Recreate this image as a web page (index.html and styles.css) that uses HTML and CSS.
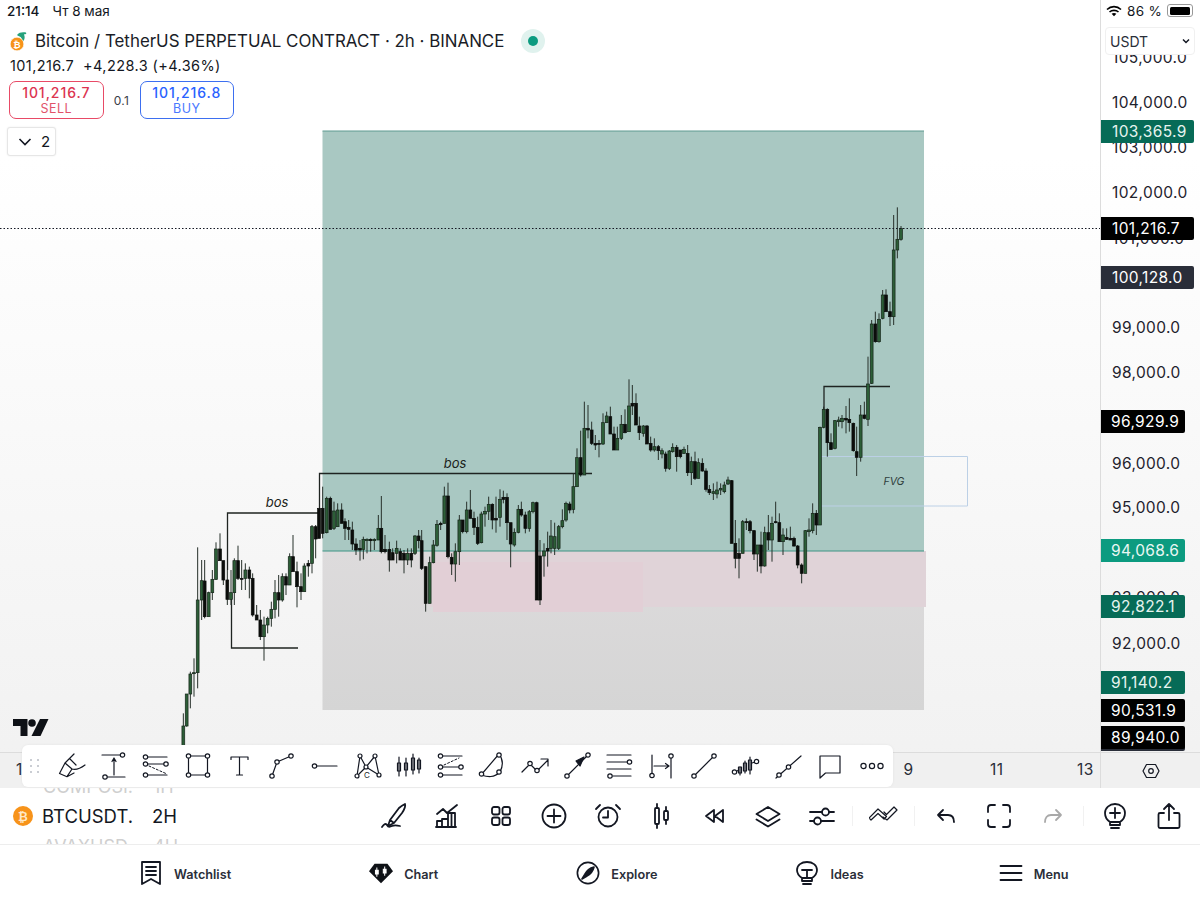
FILE: index.html
```html
<!DOCTYPE html>
<html lang="ru">
<head>
<meta charset="utf-8">
<title>BTCUSDT chart</title>
<link rel="stylesheet" href="styles.css">
</head>
<body>
<div class="screen">
  <div class="chart">
    <div class="plot">
      <svg class="plot-svg" width="1100" height="752" viewBox="0 0 1100 752">
        <defs>
          <linearGradient id="greyFade" x1="0" y1="0" x2="0" y2="1">
            <stop offset="0" stop-color="#dddbdc"/>
            <stop offset="1" stop-color="#d5d5d5"/>
          </linearGradient>
        </defs>
        <rect class="zone-grey" x="322.5" y="551" width="601.5" height="159"/>
        <rect class="zone-teal" x="322.5" y="131" width="601.5" height="420"/>
        <rect class="zone-pink-a" x="430" y="551" width="496" height="56"/>
        <rect class="zone-pink-b" x="433" y="562" width="210" height="50"/>
        <line class="zone-line" x1="322.5" y1="551" x2="924" y2="551"/>
        <line class="zone-line-top" x1="322.5" y1="131" x2="924" y2="131"/>
        <path class="fvg" d="M820 456.500H967.500V506H820"/>
        <path class="level" d="M227.500 570V513H320M231.500 593V648H298M319.500 510V473.500H592M824 410V386.500H890"/>
        <g id="candles"></g>
        <line class="last-price" x1="0" y1="228.500" x2="1100" y2="228.500"/>
        <text class="note" x="277" y="507">bos</text>
        <text class="note" x="455" y="468">bos</text>
        <text class="note small" x="894" y="485">FVG</text>
      </svg>
    </div>
    <div class="axis">
      <span class="tick" style="top:48px">105,000.0</span>
      <span class="tick" style="top:93px">104,000.0</span>
      <span class="tick" style="top:138px">103,000.0</span>
      <span class="tick" style="top:183px">102,000.0</span>
      <span class="tick" style="top:229px">101,000.0</span>
      <span class="tick" style="top:318px">99,000.0</span>
      <span class="tick" style="top:363px">98,000.0</span>
      <span class="tick" style="top:454px">96,000.0</span>
      <span class="tick" style="top:498px">95,000.0</span>
      <span class="tick" style="top:588px">93,000.0</span>
      <span class="tick" style="top:634px">92,000.0</span>
      <span class="tag wide teal" style="top:120px">103,365.9</span>
      <span class="tag wide black" style="top:217px">101,216.7</span>
      <span class="tag wide slate" style="top:266px">100,128.0</span>
      <span class="tag black" style="top:410px">96,929.9</span>
      <span class="tag bright" style="top:539px">94,068.6</span>
      <span class="tag teal" style="top:595px">92,822.1</span>
      <span class="tag teal" style="top:671px">91,140.2</span>
      <span class="tag black" style="top:699px">90,531.9</span>
      <span class="tag slate tall" style="top:729px"></span>
      <span class="tag black" style="top:726px">89,940.0</span>
    </div>
    <div class="timescale">
      <span class="date first">1</span>
      <span class="date d9">9</span>
      <span class="date d11">11</span>
      <span class="date d13">13</span>
    </div>
    <div class="corner">
      <svg width="20" height="20" viewBox="0 0 20 20" class="ic"><path d="M5.500 3.500h9L18 10l-3.500 6.500h-9L2 10z"/><circle cx="10" cy="10" r="2.300"/></svg>
    </div>
  </div>

  <div class="status">
    <span class="clock"><b>21:14</b><span>Чт 8 мая</span></span>
    <span class="sys">
      <svg width="16" height="12" viewBox="0 0 16 12"><path class="wifi" d="M1 4.500C5 .7 11 .7 15 4.500M3.500 7C6 4.800 10 4.800 12.500 7"/><path d="M5.600 8.700c1.400-1.100 3.400-1.100 4.800 0L8 11.200z"/></svg>
      <span>86 %</span>
      <span class="battery"><i></i></span>
    </span>
  </div>

  <div class="legend">
    <div class="title-row">
      <svg class="pair" width="22" height="22" viewBox="0 0 22 22"><path class="swoosh" d="M8 5c2-3 6-3 9-2.500 1 2-1 1.500-2 2 1 2 1 5-1 7-1-1-1-3-2-4-1-1-3-1.500-4-2.500z"/><circle cx="8" cy="14" r="6.800" class="coin"/><text x="8" y="17.500" class="coin-b">₿</text></svg>
      <span class="title">Bitcoin / TetherUS PERPETUAL CONTRACT · 2h · BINANCE</span>
      <span class="live"><i></i></span>
    </div>
    <div class="quote">101,216.7&nbsp; +4,228.3 (+4.36%)</div>
    <div class="trade">
      <div class="trade-btn sell"><b>101,216.7</b><span>SELL</span></div>
      <span class="qty">0.1</span>
      <div class="trade-btn buy"><b>101,216.8</b><span>BUY</span></div>
    </div>
    <div class="collapse">
      <svg width="14" height="10" viewBox="0 0 14 10"><path d="M1.500 2l5.500 5.500L12.500 2"/></svg>
      <span>2</span>
    </div>
  </div>

  <div class="currency"><span>USDT</span><svg width="10" height="7" viewBox="0 0 10 7"><path d="M2 1.500l3 3 3-3"/></svg></div>

  <svg class="tv-logo" width="36" height="19" viewBox="0 0 36 19"><path d="M0 1h14.500v17H7.500V8H0z"/><circle cx="19" cy="5" r="3.800"/><path d="M27 1h8.500l-8 17H18.500z"/></svg>

  <div class="draw-bar">
    <svg class="grip" width="12" height="16" viewBox="0 0 12 16"><g><circle cx="2" cy="2" r="1"/><circle cx="9" cy="2" r="1"/><circle cx="2" cy="8" r="1"/><circle cx="9" cy="8" r="1"/><circle cx="2" cy="14" r="1"/><circle cx="9" cy="14" r="1"/></g></svg>
    <span class="dt"><svg class="ic" width="30" height="30" viewBox="0 0 30 30"><path d="M17 3L8 12 2.500 22.500 10 25.700 17 22M8 12l7 6-5 7.700M13 8l6 6M15 18c4 1 9-1 13-4"/></svg></span>
    <span class="dt"><svg class="ic" width="30" height="30" viewBox="0 0 30 30"><path d="M3 4h18M8 26h18M15 24V8M13 10.500L15 7l2 3.500"/><circle cx="23.500" cy="4" r="2.200"/><circle cx="6" cy="26" r="2.200"/></svg></span>
    <span class="dt"><svg class="ic" width="30" height="30" viewBox="0 0 30 30"><path d="M6 6h20M6 13h17M6 24h20"/><path class="dash" d="M8 15l18 8"/><circle cx="4.500" cy="6" r="2.200"/><circle cx="4.500" cy="13" r="2.200"/><circle cx="25" cy="13" r="2.200"/><circle cx="4.500" cy="24" r="2.200"/></svg></span>
    <span class="dt"><svg class="ic" width="30" height="30" viewBox="0 0 30 30"><path d="M5.500 5h19v19h-19z"/><circle cx="5.500" cy="5" r="2.200"/><circle cx="24.500" cy="5" r="2.200"/><circle cx="5.500" cy="24" r="2.200"/><circle cx="24.500" cy="24" r="2.200"/></svg></span>
    <span class="dt"><svg class="ic" width="30" height="30" viewBox="0 0 30 30"><path d="M6 8.500V6h17v2.500M14.500 6v18M11.500 24h6"/></svg></span>
    <span class="dt"><svg class="ic" width="30" height="30" viewBox="0 0 30 30"><path d="M5 25l5-14 14-6"/><circle cx="5" cy="25" r="2.200"/><circle cx="10" cy="11" r="2.200"/><circle cx="24" cy="5" r="2.200"/></svg></span>
    <span class="dt"><svg class="ic" width="30" height="30" viewBox="0 0 30 30"><path d="M6 15h22"/><circle cx="5.500" cy="15" r="2.200"/></svg></span>
    <span class="dt"><svg class="ic" width="30" height="30" viewBox="0 0 30 30"><path d="M8 5l6 11-9 9L8 5zM8 5l6 11 9-11 4 19-13-8"/><circle cx="8" cy="5" r="2"/><circle cx="23" cy="5" r="2"/><circle cx="14" cy="16" r="2"/><circle cx="5" cy="25" r="2"/><circle cx="27" cy="24" r="2"/><text class="tiny" x="15" y="27">C</text></svg></span>
    <span class="dt"><svg class="ic" width="30" height="30" viewBox="0 0 30 30"><path d="M5 6v19M12 7v18M19 3v20M25 7v15"/><rect x="3.500" y="12" width="3" height="8"/><rect x="10.500" y="12" width="3" height="7"/><rect x="17.500" y="7" width="3" height="12"/><rect x="23.500" y="9" width="3" height="9"/></svg></span>
    <span class="dt"><svg class="ic" width="30" height="30" viewBox="0 0 30 30"><path d="M6 5h20M6 16h17M6 24h20"/><path class="dash" d="M8 14l15-7"/><circle cx="4.500" cy="5" r="2.200"/><circle cx="4.500" cy="16" r="2.200"/><circle cx="25" cy="16" r="2.200"/><circle cx="4.500" cy="24" r="2.200"/></svg></span>
    <span class="dt"><svg class="ic" width="30" height="30" viewBox="0 0 30 30"><path d="M3 24L21 3c4 5 4 12 1 18-6 6-12 5-19 3z"/><circle cx="3.500" cy="23" r="2.200"/><circle cx="21" cy="4" r="2.200"/><circle cx="21" cy="21" r="2.200"/></svg></span>
    <span class="dt"><svg class="ic" width="30" height="30" viewBox="0 0 30 30"><path d="M2 21l8-8 7 7 11-11M21 8h7v7"/><circle cx="10" cy="12.500" r="2.200"/><circle cx="17" cy="19.500" r="2.200"/></svg></span>
    <span class="dt"><svg class="ic" width="30" height="30" viewBox="0 0 30 30"><path d="M6 24l19-19"/><path class="solid" d="M22 6l-8 4 4 5z"/><circle cx="5" cy="25" r="2.200"/><circle cx="26" cy="4" r="2.200"/></svg></span>
    <span class="dt"><svg class="ic" width="30" height="30" viewBox="0 0 30 30"><path d="M3 4h24M3 11h21M3 18h24M9 25h18"/><circle cx="25.500" cy="11" r="2.200"/><circle cx="6" cy="25" r="2.200"/></svg></span>
    <span class="dt"><svg class="ic" width="30" height="30" viewBox="0 0 30 30"><path d="M5 4v18M24 7v20M7 15h15M18.500 12.500L22 15l-3.500 2.500"/><circle cx="5" cy="24.500" r="2.200"/><circle cx="24" cy="5" r="2.200"/></svg></span>
    <span class="dt"><svg class="ic" width="30" height="30" viewBox="0 0 30 30"><path d="M6 24L24 6"/><circle cx="5" cy="25" r="2.200"/><circle cx="25" cy="5" r="2.200"/></svg></span>
    <span class="dt"><svg class="ic" width="30" height="30" viewBox="0 0 30 30"><path d="M9 16v8M14 10v12M19 6v17"/><rect x="7.500" y="16" width="3" height="6"/><rect x="12.500" y="12" width="3" height="8"/><rect x="17.500" y="9" width="3" height="10"/><path d="M5 20.500l2-1M21 12l3-1"/><circle cx="3.500" cy="21" r="2.200"/><circle cx="25.500" cy="10.500" r="2.200"/></svg></span>
    <span class="dt"><svg class="ic" width="30" height="30" viewBox="0 0 30 30"><path d="M3 27L28 5"/><circle cx="6" cy="24" r="2.200"/><circle cx="15.500" cy="16" r="2.200"/></svg></span>
    <span class="dt"><svg class="ic" width="30" height="30" viewBox="0 0 30 30"><path d="M5 5h20v17H10.500L5 27z"/></svg></span>
    <span class="dt"><svg class="ic" width="30" height="30" viewBox="0 0 30 30"><circle cx="6.500" cy="15" r="2.600"/><circle cx="15" cy="15" r="2.600"/><circle cx="23.500" cy="15" r="2.600"/></svg></span>
  </div>

  <div class="symbol-bar">
    <div class="symbols">
      <span class="sym-row ghost up"><span class="sym">COMPOSI.</span><span class="tf">1H</span></span>
      <span class="sym-row current">
        <svg class="btc" width="20" height="20" viewBox="0 0 20 20"><circle cx="10" cy="10" r="10"/><text x="10" y="14.500">₿</text></svg>
        <span class="sym">BTCUSDT.</span><span class="tf">2H</span>
      </span>
      <span class="sym-row ghost down"><span class="sym">AVAXUSD.</span><span class="tf">4H</span></span>
    </div>
    <div class="tools">
      <span class="tb"><svg class="ic b" width="28" height="28" viewBox="0 0 28 28"><path d="M25 2c1 3-1 6-3 9l-8 10-4-3 9-12c2-2 4-3 6-4zM10 18l-2 6 6-3M2 25c2-3 4-4 5-2s3 2 5 1 4-1 8 0"/></svg></span>
      <span class="tb"><svg class="ic b" width="28" height="28" viewBox="0 0 28 28"><path d="M4 12l6-5 4 4 10-8M4 25v-6h5v6zM9 25v-8h6v8zM15 25V11h7v14zM3 25h20M18.500 12v13"/></svg></span>
      <span class="tb"><svg class="ic b" width="28" height="28" viewBox="0 0 28 28"><rect x="5" y="5" width="7.500" height="7.500" rx="2"/><rect x="15.500" y="5" width="7.500" height="7.500" rx="2"/><rect x="5" y="15.500" width="7.500" height="7.500" rx="2"/><rect x="15.500" y="15.500" width="7.500" height="7.500" rx="2"/></svg></span>
      <span class="tb"><svg class="ic b" width="28" height="28" viewBox="0 0 28 28"><circle cx="14" cy="14" r="11.500"/><path d="M14 7.500v13M7.500 14h13"/></svg></span>
      <span class="tb"><svg class="ic b" width="28" height="28" viewBox="0 0 28 28"><circle cx="14" cy="15" r="9.500"/><path d="M14 9v6.500H9M2 7l4-4M26 7l-4-4"/></svg></span>
      <span class="tb"><svg class="ic b" width="28" height="28" viewBox="0 0 28 28"><rect x="8" y="6" width="4" height="16" rx="1"/><rect x="17" y="9" width="4" height="9" rx="1"/><path d="M10 2v4M10 22v4M19 5v4M19 18v4"/></svg></span>
      <span class="tb"><svg class="ic b" width="28" height="28" viewBox="0 0 28 28"><path d="M13 8l-8 6 8 6zM22 8l-8 6 8 6z"/></svg></span>
      <span class="tb"><svg class="ic b" width="28" height="28" viewBox="0 0 28 28"><path d="M14 5l11.500 7L14 19 2.500 12zM2.500 17.500L14 24.500l11.500-7"/></svg></span>
      <span class="tb"><svg class="ic b" width="28" height="28" viewBox="0 0 28 28"><path d="M2 10h12M21 10h5M2 19h4M13 19h13"/><circle cx="17.500" cy="10" r="3.500"/><circle cx="9.500" cy="19" r="3.500"/></svg></span>
      <span class="sep"></span>
      <span class="tb"><svg class="ic thin" width="30" height="28" viewBox="0 0 30 28"><path d="M2 18l7-6.500 6 5.500 2.500-2.500L9 7 0 16zM15 10l2 2 .5.500L25 5l3 3-10 10-4-3"/></svg></span>
      <span class="sep"></span>
      <span class="tb"><svg class="ic b" width="28" height="28" viewBox="0 0 28 28"><path d="M11 8l-5 5 5 5M6 13h10c4 0 6 3 6 7"/></svg></span>
      <span class="tb"><svg class="ic b" width="28" height="28" viewBox="0 0 28 28"><path d="M10 3H6a3 3 0 0 0-3 3v4M18 3h4a3 3 0 0 1 3 3v4M10 25H6a3 3 0 0 1-3-3v-4M18 25h4a3 3 0 0 0 3-3v-4"/></svg></span>
      <span class="tb"><svg class="ic b off" width="28" height="28" viewBox="0 0 28 28"><path d="M17 8l5 5-5 5M22 13H12c-4 0-6 3-6 7"/></svg></span>
      <span class="sep"></span>
      <span class="tb"><svg class="ic b" width="28" height="28" viewBox="0 0 28 28"><path d="M9 20c-3-2-5-5-5-9 0-5 4.500-9 10-9s10 4 10 9c0 4-2 7-5 9zM9 20v3h10v-3M10 26h8M14 6v10M9 11h10"/></svg></span>
      <span class="tb"><svg class="ic b" width="28" height="28" viewBox="0 0 28 28"><path d="M9 11H5a1.500 1.500 0 0 0-1.500 1.500v12A1.500 1.500 0 0 0 5 26h18a1.500 1.500 0 0 0 1.500-1.500v-12A1.500 1.500 0 0 0 23 11h-4M14 18V2M9 7l5-5 5 5"/></svg></span>
    </div>
  </div>

  <nav class="tabs">
    <span class="tab"><svg class="ic b" width="24" height="26" viewBox="0 0 24 26"><path d="M3 2h18v22l-9-5-9 5zM7 7h10M7 11h10M7 15h10"/></svg><span class="tab-label">Watchlist</span></span>
    <span class="tab"><svg width="24" height="26" viewBox="0 0 26 26"><path class="gem" d="M6 3h14l6 8-13 13L0 11z"/><path class="gem-in" d="M8.500 7v10M17 6v10M7 10h3v4H7zM15.500 9h3v4h-3z"/></svg><span class="tab-label">Chart</span></span>
    <span class="tab"><svg class="ic b" width="24" height="26" viewBox="0 0 26 26"><circle cx="13" cy="13" r="11.500"/><path class="solid" d="M19.500 6.500c-4 1-8 4-10 8l-3 5 5-3c4-2 7-6 8-10z"/></svg><span class="tab-label">Explore</span></span>
    <span class="tab"><svg class="ic b" width="24" height="26" viewBox="0 0 24 26"><path d="M7 18c-3-2-5-4-5-8C2 5 6.500 2 12 2s10 3 10 8c0 4-2 6-5 8zM7 18v3h10v-3M8 24h8M7 10h10M12 10v8"/></svg><span class="tab-label">Ideas</span></span>
    <span class="tab menu"><svg class="ic b" width="24" height="26" viewBox="0 0 23 26"><path d="M1 6h21M1 13h21M1 20h21"/></svg><span class="tab-label">Menu</span></span>
  </nav>
</div>
<script src="chart.js"></script>
</body>
</html>
```
FILE: styles.css
```css
* { box-sizing: border-box; }
html, body { margin: 0; padding: 0; background: #fff; }
body { font-family: Inter, "Liberation Sans", sans-serif; color: #131722; }
.screen { position: relative; width: 1200px; height: 900px; overflow: hidden; display: flex; flex-direction: column; background: #fff; }

.chart { height: 788px; display: grid; grid-template-columns: 1100px 100px; grid-template-rows: 752px 36px; background: linear-gradient(#fff 20%, #f1f1f1 100%); }
.plot { position: relative; overflow: hidden; }
.plot-svg { display: block; }
.zone-teal { fill: #a9c8c2; }
.zone-grey { fill: url(#greyFade); }
.zone-pink-a { fill: #e0d3d8; }
.zone-pink-b { fill: #e2cfd6; }
.zone-line { stroke: #3d9484; stroke-width: 1; }
.zone-line-top { stroke: #5f9a90; stroke-width: 1; }
.fvg { fill: none; stroke: #bcd0e6; stroke-width: 1; }
.level { fill: none; stroke: #1f2421; stroke-width: 1.300; }
.last-price { stroke: #131722; stroke-width: 1; stroke-dasharray: 1.500 2; }
.note { font: italic 13px Inter, sans-serif; fill: #1b2320; text-anchor: middle; }
.note.small { font-size: 10.500px; fill: #2f3f3d; }
.wick { stroke: #26302a; stroke-width: 1; }
.body-g { fill: #2c5e37; stroke: #16261a; stroke-width: .7; }
.body-b { fill: #0b0d0b; stroke: #0b0d0b; stroke-width: .7; }

.axis { position: relative; overflow: hidden; border-left: 1px solid #dcdcdc; }
.tick { position: absolute; left: 11px; font-size: 15.500px; line-height: 20px; letter-spacing: .35px; color: #1e222d; white-space: nowrap; }
.tag { position: absolute; left: 0; width: 84px; height: 22.500px; padding-left: 10px; line-height: 23px; font-size: 15.500px; letter-spacing: .35px; color: #fff; border-radius: 0 2px 2px 0; white-space: nowrap; }
.tag.wide { width: 93px; padding-left: 11px; }
.tag.tall { height: 22px; }
.teal { background: #076b57; color: #e6f4ef; }
.black { background: #000; }
.slate { background: #2a2e39; }
.bright { background: #0c9b80; color: #e9f7f3; }

.timescale { position: relative; background: #f0f0f0; border-top: 1px solid #dcdcdc; }
.corner { display: flex; align-items: center; justify-content: center; background: #f0f0f0; border-top: 1px solid #dcdcdc; border-left: 1px solid #dcdcdc; }
.date { position: absolute; top: 7px; font-size: 15.500px; line-height: 20px; letter-spacing: .5px; color: #2a2e39; }
.date.first { left: 16px; }
.date.d9 { left: 903.500px; }
.date.d11 { left: 990px; }
.date.d13 { left: 1077px; }

.ic { fill: none; stroke: #131722; stroke-width: 1.200; stroke-linejoin: round; stroke-linecap: round; }
.ic circle { fill: #fff; }
.ic.b { stroke-width: 1.800; }
.ic.b circle { fill: none; }
.ic.off { stroke: #a9a9a9; }
.ic .dash { stroke-dasharray: 2 2; stroke-width: 1; }
.ic .solid { fill: #131722; }
.ic .tiny { font: 8px Inter, sans-serif; fill: #131722; stroke: none; text-anchor: middle; }

.status { position: absolute; top: 0; left: 0; width: 1200px; height: 21px; padding: 0 7px; display: flex; justify-content: space-between; align-items: center; font-size: 13.500px; }
.clock { display: flex; gap: 13px; }
.clock b { font-weight: 500; }
.sys { display: flex; align-items: center; gap: 5px; font-size: 13.500px; letter-spacing: .3px; }
.wifi { fill: none; stroke: #000; stroke-width: 1.600; }
.battery { display: block; width: 26px; height: 13px; padding: 1.500px; border: 1px solid #999; border-radius: 3px; }
.battery i { display: block; width: 20px; height: 8px; background: #000; border-radius: 1.500px; }

.legend { position: absolute; left: 9px; top: 30px; display: flex; flex-direction: column; align-items: flex-start; }
.title-row { display: flex; align-items: center; height: 22px; }
.pair { flex: none; margin-right: 4px; }
.swoosh { fill: #26a17b; }
.coin { fill: #f7931a; stroke: #fff; stroke-width: .6; }
.coin-b { font: 700 9px "DejaVu Sans", sans-serif; fill: #fff; text-anchor: middle; }
.title { font-size: 16.900px; white-space: nowrap; color: #1a1d27; }
.live { width: 24px; height: 24px; margin-left: 17px; border-radius: 50%; background: #e0f2ee; display: flex; align-items: center; justify-content: center; }
.live i { width: 10px; height: 10px; border-radius: 50%; background: #0c9b80; }
.quote { margin: 3px 0 0 1px; font-size: 14.500px; line-height: 22px; letter-spacing: .4px; white-space: nowrap; color: #131722; }
.trade { margin-top: 4px; display: flex; align-items: center; }
.trade-btn { width: 94.500px; height: 38px; border: 1px solid; border-radius: 7px; background: #fff; display: flex; flex-direction: column; align-items: center; justify-content: center; }
.trade-btn b { font-size: 14px; font-weight: 500; line-height: 18px; letter-spacing: .95px; }
.trade-btn span { font-size: 12.500px; line-height: 14px; letter-spacing: .5px; opacity: .85; }
.sell { color: #dc3450; border-color: #e84a66; }
.buy { color: #2962ff; border-color: #3d6ff0; }
.qty { width: 36px; text-align: center; font-size: 12px; letter-spacing: .3px; color: #3a3d48; }
.collapse { margin: 8px 0 0 -2px; width: 49px; height: 29px; border: 1px solid #e6e6e6; border-radius: 3px; background: #fff; display: flex; align-items: center; gap: 9px; padding-left: 10px; font-size: 15px; box-shadow: 0 0 2px rgba(0,0,0,.08); }
.collapse path { fill: none; stroke: #131722; stroke-width: 1.600; }

.currency { position: absolute; left: 1105px; top: 27px; width: 90px; height: 28px; background: #fff; border: 1px solid #f0f0f0; border-radius: 4px; display: flex; align-items: center; justify-content: space-between; padding: 0 3px 0 4px; font-size: 14px; color: #2a2e39; }
.currency path { fill: none; stroke: #131722; stroke-width: 1.500; }

.tv-logo { position: absolute; left: 13px; top: 718px; fill: #0e1116; }

.draw-bar { position: absolute; left: 22px; top: 745px; width: 871px; height: 42px; background: #fff; border-radius: 6px; display: flex; align-items: center; padding-left: 7px; box-shadow: 0 0 3px rgba(0,0,0,.06); }
.grip { flex: none; fill: #b9bcc4; width: 12px; margin-right: 9.500px; }
.dt { flex: none; width: 42.150px; display: flex; justify-content: center; }

.symbol-bar { height: 57px; display: flex; background: #fff; border-bottom: 1px solid #ededed; overflow: hidden; }
.symbols { flex: none; width: 367px; height: 56px; position: relative; padding-left: 13px; display: flex; flex-direction: column; justify-content: center; overflow: hidden; }
.sym-row { display: flex; align-items: center; font-size: 18.500px; height: 26px; flex: none; }
.sym { width: 110px; display: block; }
.sym-row.current .sym { margin-left: 9px; }
.sym-row.ghost { color: #cfcfcf; padding-left: 30px; font-size: 18px; }
.sym-row.up { margin-top: -11px; margin-bottom: 4px; }
.sym-row.down { margin-top: 4px; margin-bottom: -11px; }
.btc { fill: #f7931a; flex: none; }
.btc text { font: 700 12px "DejaVu Sans", sans-serif; fill: #ffe9c8; text-anchor: middle; }
.tools { display: flex; align-items: center; height: 56px; }
.tb { flex: none; width: 53.500px; display: flex; justify-content: center; }
.sep { flex: none; width: 1px; height: 20px; margin: 0 3.800px; background: #f1f1f1; }

.tabs { flex: 1; display: flex; align-items: center; gap: 138px; padding: 0 0 0 139px; font-size: 12.700px; font-weight: 600; color: #2a2e39; background: #fff; }
.tab { display: flex; align-items: center; gap: 11px; white-space: nowrap; }
.tab.menu { margin-left: -3px; }
.tab-label { padding-top: 3px; }
.gem { fill: #0e1116; }
.gem-in { fill: #fff; stroke: #fff; stroke-width: 1.100; }
```
FILE: chart.js
```js
// Each row: zoomX, wickTop, bodyTop, bodyBottom, wickBottom, colour (g = green, b = black).
// The rows were read from three regions of the chart; ox/oy place each region.
var regions = [
  { ox: 170, oy: 470, rows: [
    [40,730,768,830,830,'g'],[50,672,672,768,770,'g'],[61,605,612,672,715,'g'],[72,565,608,610,680,'g'],[83,232,390,608,655,'g'],
    [95,270,332,390,450,'g'],[104,270,333,440,445,'b'],[116,365,368,440,440,'g'],[127,300,328,368,390,'g'],[138,217,237,328,330,'g'],
    [150,190,237,272,272,'b'],[160,272,272,330,345,'b'],[172,300,330,388,405,'b'],[183,300,368,388,405,'g'],[193,265,272,368,405,'g'],
    [204,227,272,325,330,'b'],[215,270,325,327,360,'b'],[226,280,300,325,360,'g'],[238,290,300,325,385,'b'],[248,310,325,435,440,'b'],
    [260,405,435,450,450,'b'],[271,420,450,500,510,'b'],[282,440,465,500,572,'g'],[293,440,445,465,490,'g'],[304,395,418,445,470,'g'],
    [315,330,368,418,445,'g'],[326,315,368,390,440,'b'],[337,310,320,390,395,'g'],[348,310,320,345,375,'b'],[359,250,260,345,345,'g'],
    [369,195,260,305,305,'b'],[381,275,305,350,412,'b'],[393,310,350,365,390,'b'],[403,280,288,365,365,'g'],[415,270,280,288,320,'b'],
    [426,165,170,280,310,'g'],[437,165,170,207,265,'b'],[447,120,115,205,205,'b'],[458,50,115,190,205,'b'],[470,80,85,188,190,'g'],
    [481,80,85,178,178,'b'],[492,95,123,175,180,'g'],[503,100,120,170,170,'g'],[515,100,120,160,160,'b'],[525,145,155,175,210,'b'],
    [536,150,172,178,210,'b'],[547,155,180,222,240,'b'],[558,205,222,240,255,'b'],[570,210,235,240,272,'b'],[580,200,208,238,268,'g'],
    [591,205,208,212,250,'g'],[602,205,208,212,245,'b'],[613,205,208,212,240,'g'],[625,135,175,210,210,'g'],[634,78,175,245,250,'b'],
    [645,195,238,245,250,'b'],[658,215,238,270,305,'b'],[668,235,248,270,270,'b'],[680,212,235,250,280,'g'],[691,235,245,270,270,'b'],
    [702,240,250,270,310,'b'],[713,235,250,270,285,'g'],[724,235,250,270,292,'b'],[735,195,198,250,255,'g'],[746,180,198,212,235,'b']
  ]},
  { ox: 420, oy: 370, rows: [
    [5,480,512,595,600,'b'],[17,590,590,700,725,'b'],[29,560,578,700,700,'g'],[40,510,525,578,580,'g'],[51,450,463,526,530,'g'],
    [62,455,460,464,480,'b'],[73,350,378,460,460,'g'],[84,338,378,560,565,'b'],[95,550,562,582,615,'b'],[106,520,545,582,635,'g'],
    [118,435,450,545,585,'g'],[128,450,450,485,490,'b'],[140,395,420,485,490,'g'],[151,360,420,445,445,'b'],[162,425,445,472,495,'b'],
    [173,440,472,520,525,'b'],[184,425,432,518,520,'g'],[195,410,424,432,470,'g'],[206,380,403,424,450,'g'],[217,400,403,450,478,'b'],
    [228,380,445,450,488,'b'],[240,358,388,442,470,'g'],[250,362,382,388,400,'b'],[261,370,382,458,510,'b'],[272,460,458,522,592,'b'],
    [283,475,487,525,530,'g'],[295,405,418,487,490,'g'],[304,395,418,435,440,'b'],[316,425,435,475,490,'b'],[328,420,425,475,485,'g'],
    [339,395,398,425,430,'g'],[350,395,398,690,690,'b'],[360,510,558,690,705,'b'],[372,520,543,558,620,'g'],[383,485,535,543,590,'b'],
    [393,450,498,535,550,'g'],[404,458,500,535,555,'g'],[416,465,470,535,540,'g'],[427,418,452,470,475,'g'],[438,395,400,450,455,'g'],
    [449,395,402,420,430,'b'],[460,310,350,418,430,'g'],[471,235,263,350,350,'g'],[482,182,263,315,320,'b'],[493,95,175,315,315,'g'],
    [504,105,175,180,205,'b'],[515,155,180,220,225,'b'],[526,195,220,225,240,'b'],[537,210,220,223,262,'b'],[549,130,158,222,225,'g'],
    [560,125,138,158,158,'g'],[571,110,140,192,192,'b'],[582,170,192,240,240,'b'],[592,170,205,240,240,'g'],[604,135,163,205,210,'g'],
    [615,118,163,188,190,'b'],[627,28,108,185,185,'g'],[637,45,100,108,135,'b'],[648,70,100,165,165,'b'],[658,140,168,188,210,'b'],
    [670,165,168,190,200,'g'],[681,165,168,222,220,'b'],[692,200,220,240,245,'b'],[703,205,230,240,245,'g'],[715,225,230,242,270,'b'],
    [726,235,242,252,265,'g'],[737,245,252,295,305,'b'],[748,240,243,295,300,'g'],[758,220,232,245,248,'g'],[770,225,232,260,305,'b'],
    [781,240,240,260,265,'b'],[792,230,238,250,252,'g'],[803,225,250,308,318,'b'],[814,260,275,308,345,'g'],[825,245,275,325,330,'b'],
    [835,265,278,325,325,'g'],[847,265,280,303,305,'b'],[858,295,303,358,365,'b'],[868,345,358,368,375,'b'],[880,340,365,370,390,'g'],
    [891,335,360,372,385,'g']
  ]},
  { ox: 720, oy: 200, rows: [
    [2,850,865,870,885,'g'],[13,845,855,875,880,'g'],[24,830,840,852,855,'g'],[35,840,842,1030,1030,'b'],[46,960,1030,1075,1105,'b'],
    [57,1015,1060,1075,1135,'b'],[68,960,965,1060,1060,'g'],[79,955,965,968,990,'b'],[90,960,965,992,1000,'b'],[102,990,992,1062,1080,'b'],
    [112,1035,1035,1062,1115,'g'],[123,995,1035,1098,1120,'b'],[134,980,998,1098,1100,'g'],[145,945,998,1020,1050,'b'],[156,950,970,1020,1085,'g'],
    [167,905,965,968,970,'b'],[178,940,968,1025,1025,'b'],[189,985,1005,1025,1065,'g'],[200,985,1012,1018,1020,'b'],[211,980,1015,1020,1020,'b'],
    [222,1010,1015,1038,1040,'b'],[233,1035,1038,1095,1105,'b'],[245,1090,1095,1120,1150,'b'],[256,990,992,1120,1120,'g'],[267,955,990,995,1010,'g'],
    [278,910,940,992,1000,'g'],[289,930,940,975,1005,'b'],[300,680,682,975,975,'g'],[311,620,628,682,685,'g'],[322,625,628,728,770,'b'],
    [333,700,728,748,750,'b'],[345,660,662,745,748,'g'],[356,650,660,665,680,'g'],[366,645,655,665,685,'g'],[378,618,655,660,700,'b'],
    [388,595,658,668,695,'b'],[400,668,670,752,755,'b'],[410,680,755,772,828,'b'],[422,615,645,772,785,'g'],[433,605,645,655,658,'b'],
    [444,470,552,658,678,'g'],[455,360,372,550,552,'g'],[466,335,372,425,428,'b'],[477,340,358,425,428,'g'],[488,270,285,355,358,'g'],
    [498,268,285,335,335,'b'],[510,305,335,350,378,'b'],[521,45,150,350,375,'g'],[532,22,118,150,175,'g'],[543,78,85,118,122,'g']
  ]}
];

var NS = 'http://www.w3.org/2000/svg';
var group = document.getElementById('candles');

function add(tag, attrs) {
  var el = document.createElementNS(NS, tag);
  for (var k in attrs) el.setAttribute(k, attrs[k]);
  group.appendChild(el);
}

regions.forEach(function (r) {
  r.rows.forEach(function (c) {
    var x = r.ox + c[0] / 3;
    add('line', { 'class': 'wick', x1: x, x2: x, y1: r.oy + c[1] / 3, y2: r.oy + c[4] / 3 });
    add('rect', {
      'class': c[5] === 'g' ? 'body-g' : 'body-b',
      x: x - 1.4,
      y: r.oy + c[2] / 3,
      width: 2.8,
      height: Math.max(1, (c[3] - c[2]) / 3)
    });
  });
});
```
